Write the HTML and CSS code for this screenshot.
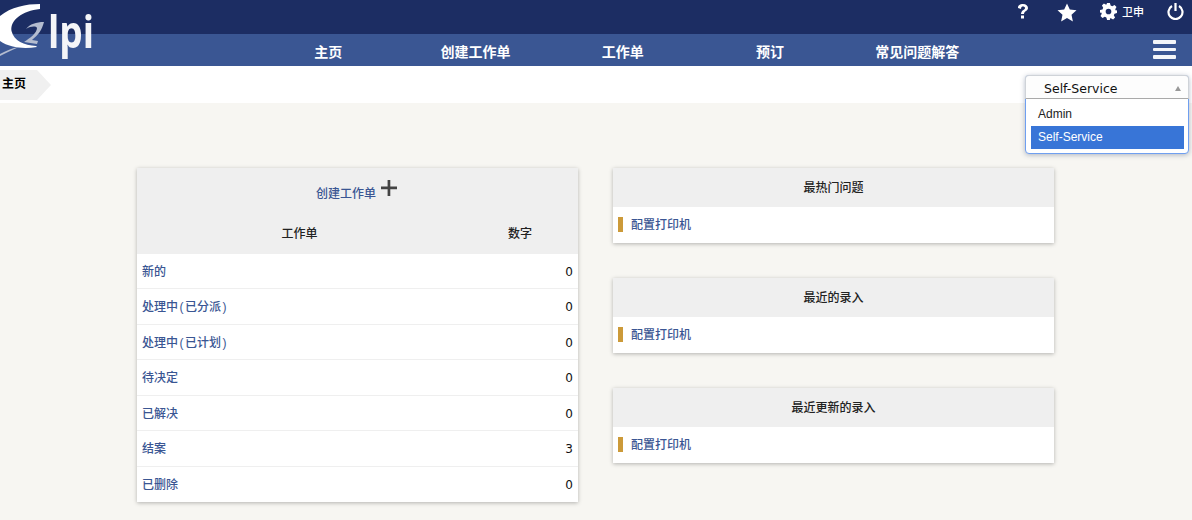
FILE: index.html
```html
<!DOCTYPE html>
<html lang="zh">
<head>
<meta charset="utf-8">
<title>GLPI</title>
<link rel="stylesheet" href="styles.css">
</head>
<body>
<header class="header">
  <svg class="logo" width="130" height="66" viewBox="0 0 130 66" aria-label="GLPI">
    <path class="logo-g" d="M40 4 C26 4 11 7 0 16 L0 41 C10 48 24 49 37 47 L36 46 C24 45 14 41 11.500 31 C10 20 22 11 40 9 Z"/>
    <path class="logo-swoosh" d="M44 22 C36 22 30 24 26 29 C31 26 36 26 37 28 C37 33 30 38 24 42 L37 44 L38 41 L32 40 C38 35 42 30 44 22 Z"/>
    <path class="logo-swoosh" d="M0 56 L0 54 C6 51 12 48 19 47 C12 50 6 53 0 56 Z"/>
    <text class="logo-text" x="48" y="47.500" textLength="46" lengthAdjust="spacingAndGlyphs">lpi</text>
  </svg>
  <div class="topbar">
    <svg class="top-icon" width="12" height="18" viewBox="0 0 12 18"><path d="M1 5 C1 2 3 1 6 1 C9 1 11 3 11 5 C11 8 7 8 7 11 L4 11 C4 7 8 7 8 5 C8 4 7 3.500 6 3.500 C5 3.500 4 4 4 6 Z"/><rect x="4" y="12.500" width="3" height="3"/></svg>
    <svg class="top-icon star" width="20" height="19" viewBox="0 0 20 19"><path d="M10 0.500 L12.800 6.600 L19.500 7.300 L14.500 11.800 L15.900 18.400 L10 15 L4.100 18.400 L5.500 11.800 L0.500 7.300 L7.200 6.600 Z"/></svg>
    <span class="user">
      <svg class="top-icon" width="17" height="17" viewBox="0 0 24 24"><path fill-rule="evenodd" d="M10 0 H14 L15 3.500 L17.300 4.500 L20.500 2.700 L23.300 5.500 L21.500 8.700 L22.500 11 L24 10 V14 L20.500 15 L19.500 17.300 L21.300 20.500 L18.500 23.300 L15.300 21.500 L14 22 L14 24 H10 L9 20.500 L6.700 19.500 L3.500 21.300 L0.700 18.500 L2.500 15.300 L1.500 13 L0 14 V10 L3.500 9 L4.500 6.700 L2.700 3.500 L5.500 0.700 L8.700 2.500 L9 2 Z M12 8 A4 4 0 1 0 12 16 A4 4 0 1 0 12 8 Z"/></svg>
      <span class="user-name">卫申</span>
    </span>
    <svg class="top-icon power" width="17" height="18" viewBox="0 0 17 18"><path class="power-stroke" d="M5 4 A7 7 0 1 0 12 4 M8.500 1 V9"/></svg>
  </div>
  <nav class="nav">
    <ul class="nav-list">
      <li class="nav-item">主页</li>
      <li class="nav-item">创建工作单</li>
      <li class="nav-item">工作单</li>
      <li class="nav-item">预订</li>
      <li class="nav-item">常见问题解答</li>
    </ul>
    <div class="burger"><span></span><span></span><span></span></div>
  </nav>
</header>
<div class="crumbs">
  <span class="crumb">主页</span>
</div>
<div class="profile">
  <div class="profile-current">Self-Service<span class="caret"></span></div>
  <ul class="profile-list">
    <li class="profile-option">Admin</li>
    <li class="profile-option selected">Self-Service</li>
  </ul>
</div>
<main class="main">
  <section class="panel">
    <div class="create">
      <a class="link create-link">创建工作单</a>
      <svg class="plus" width="18" height="18" viewBox="0 0 18 18"><path d="M7.600 1 H10.300 V7.600 H17 V10.300 H10.300 V17 H7.600 V10.300 H1 V7.600 H7.600 Z"/></svg>
    </div>
    <table class="tickets">
      <thead>
        <tr><th class="col-name">工作单</th><th class="col-count">数字</th></tr>
      </thead>
      <tbody>
        <tr><td class="link">新的</td><td class="num">0</td></tr>
        <tr><td class="link">处理中<span class="paren">(</span>已分派<span class="paren">)</span></td><td class="num">0</td></tr>
        <tr><td class="link">处理中<span class="paren">(</span>已计划<span class="paren">)</span></td><td class="num">0</td></tr>
        <tr><td class="link">待决定</td><td class="num">0</td></tr>
        <tr><td class="link">已解决</td><td class="num">0</td></tr>
        <tr><td class="link">结案</td><td class="num">3</td></tr>
        <tr><td class="link">已删除</td><td class="num">0</td></tr>
      </tbody>
    </table>
  </section>
  <div class="side">
    <section class="panel">
      <h2 class="panel-title">最热门问题</h2>
      <div class="entry"><span class="marker"></span><a class="link entry-link">配置打印机</a></div>
    </section>
    <section class="panel">
      <h2 class="panel-title">最近的录入</h2>
      <div class="entry"><span class="marker"></span><a class="link entry-link">配置打印机</a></div>
    </section>
    <section class="panel">
      <h2 class="panel-title">最近更新的录入</h2>
      <div class="entry"><span class="marker"></span><a class="link entry-link">配置打印机</a></div>
    </section>
  </div>
</main>
</body>
</html>
```
FILE: styles.css
```css
* { box-sizing: border-box; }
html, body { margin: 0; padding: 0; }
body {
  position: relative;
  width: 1192px;
  height: 520px;
  overflow: hidden;
  background: #f7f6f2;
  color: #222;
  font-family: "Liberation Sans", "Noto Sans CJK SC", sans-serif;
  font-size: 12px;
}
ul { list-style: none; margin: 0; padding: 0; }

.header { position: relative; height: 66px; background: #1c2d63; }
.logo { position: absolute; left: 0; top: 0; z-index: 1; overflow: visible; filter: blur(.4px); }
.logo-g { fill: #fff; }
.logo-swoosh { fill: #b4bccf; }
.logo-text { fill: #f4f5f8; font: 700 45px "Open Sans", "Liberation Sans", sans-serif; }

.topbar {
  height: 34px;
  display: flex;
  align-items: flex-start;
  justify-content: flex-end;
  padding: 2px 8px 0 0;
}
.top-icon { fill: #fff; flex: none; margin-top: 1px; }
.star { margin-left: 28px; }
.user { display: flex; align-items: flex-start; margin-left: 23px; }
.user-name { color: #fff; font-size: 11px; font-weight: 500; line-height: 20px; margin: 0 0 0 5px; }
.power { margin: 0 0 0 23px; }
.power-stroke { fill: none; stroke: #fff; stroke-width: 2.200; }

.nav { height: 32px; background: #3a5693; display: flex; align-items: center; position: relative; }
.nav-list { display: grid; grid-template-columns: repeat(5, 147.300px); margin-left: 254.500px; }
.nav-item { color: #fff; font-size: 14px; font-weight: 700; text-align: center; line-height: 32px; height: 36px; padding-top: 4px; }
.burger { position: absolute; left: 1153px; top: 6px; display: flex; flex-direction: column; gap: 4px; }
.burger span { display: block; width: 23px; height: 3.500px; background: #f4f6fa; border-radius: 1px; }

.crumbs { height: 37px; background: #fff; padding-top: 4px; }
.crumb {
  display: block;
  width: 51px;
  height: 30px;
  line-height: 29px;
  padding-left: 2px;
  background: #f0f0f0;
  color: #000;
  font-weight: 700;
  clip-path: polygon(0 0, 37px 0, 100% 50%, 37px 100%, 0 100%);
}

.profile {
  position: absolute;
  left: 1025px;
  top: 75px;
  width: 164px;
  height: 79px;
  background: #fff;
  border: 1px solid #6f9ff0;
  border-radius: 4px;
  box-shadow: 0 1px 5px rgba(40, 60, 100, .35);
}
.profile-current {
  position: relative;
  height: 24px;
  margin: -1px -1px 0;
  padding-left: 18px;
  line-height: 26px;
  font-family: "DejaVu Sans", sans-serif;
  font-size: 12.500px;
  color: #111;
  border: 1px solid #cfd3d8;
  border-bottom-color: #aaa;
  border-radius: 4px 4px 0 0;
  background: #fdfdfd;
}
.caret {
  position: absolute;
  right: 7px;
  top: 10px;
  width: 0;
  height: 0;
  border-left: 3px solid transparent;
  border-right: 3px solid transparent;
  border-bottom: 5px solid #999;
}
.profile-list { padding: 5px 4px 0 5px; }
.profile-option { height: 22px; padding-left: 7px; line-height: 21px; color: #222; }
.selected { height: 23px; background: #3875d7; color: #fff; line-height: 22px; }

.main {
  display: flex;
  align-items: flex-start;
  gap: 35px;
  padding: 65px 0 0 137px;
}
.side { display: flex; flex-direction: column; gap: 35px; }
.panel { width: 441px; background: #fff; box-shadow: 0 1px 4px rgba(0, 0, 0, .28); }
.link { color: #3a5693; font-weight: 500; }

.create {
  height: 46px;
  background: #efefef;
  display: flex;
  justify-content: center;
  align-items: flex-start;
  padding: 11px 0 0 0;
  line-height: 28px;
}
.create-link { margin: 0 0 0 -1px; padding-top: 1px; }
.plus { fill: #444; margin: 0 0 0 4px; flex: none; }

.tickets { width: 100%; border-collapse: collapse; table-layout: fixed; }
.tickets th { height: 40px; background: #efefef; font-weight: 500; color: #222; padding: 0 0 4px; }
.col-name { width: 325px; }
.col-count { width: 116px; }
.tickets td { height: 35.500px; padding: 0 5px 1px; border-bottom: 1px solid #efefef; }
.tickets tbody tr:first-child td { height: 34.500px; }
.tickets tbody tr:last-child td { border-bottom: 0; }
.paren { padding: 0 1.500px; }
.tickets td.num { padding: 2px 5px 0; text-align: right; color: #111; font-family: "DejaVu Sans", sans-serif; }

.panel-title {
  margin: 0;
  height: 39px;
  background: #efefef;
  font-size: 12px;
  font-weight: 500;
  line-height: 41px;
  text-align: center;
  color: #222;
}
.entry { height: 36px; display: flex; align-items: center; padding: 0 0 2px 5px; }
.entry-link { margin-bottom: 2px; }
.marker { width: 5px; height: 15px; background: #cc9a39; margin-right: 8px; }
```
